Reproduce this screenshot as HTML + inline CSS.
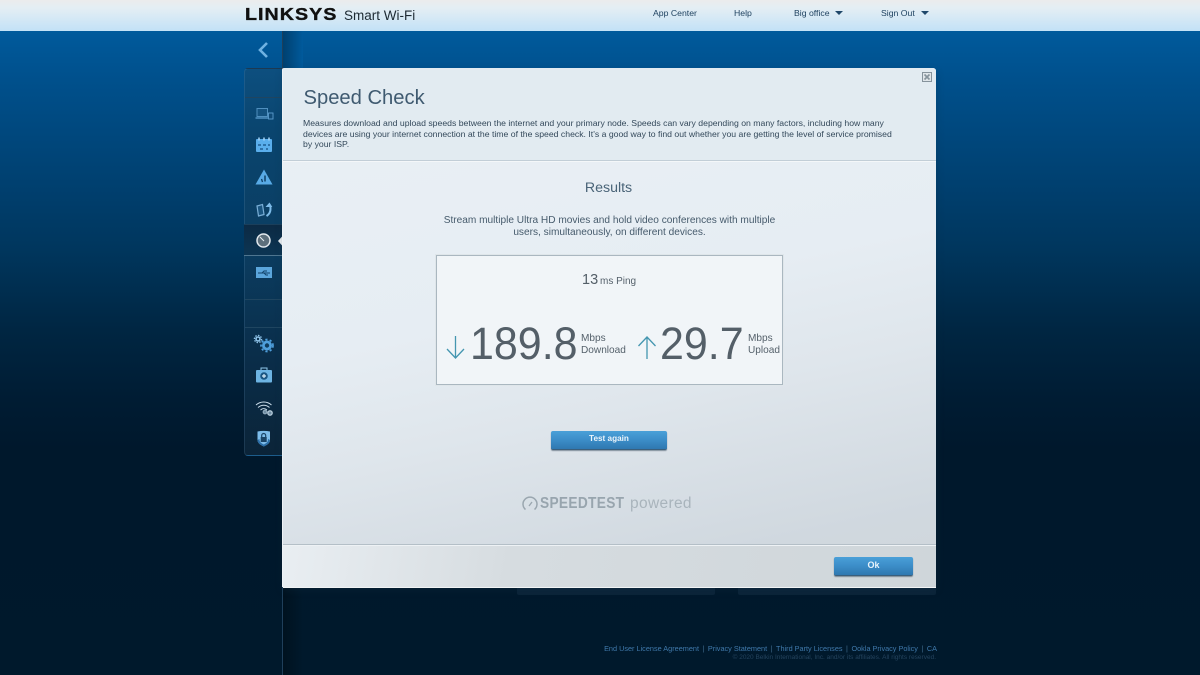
<!DOCTYPE html>
<html><head><meta charset="utf-8"><title>Speed Check</title>
<style>
html,body{margin:0;padding:0}
body{width:1200px;height:675px;overflow:hidden;position:relative;font-family:"Liberation Sans",sans-serif;background:linear-gradient(180deg,#005a9c 31px,#00508c 80px,#003f6e 190px,#00365d 250px,#002642 330px,#001c33 400px,#00182c 450px,#00192c 675px)}
.a{position:absolute}
#top{left:0;top:0;width:1200px;height:31px;background:linear-gradient(180deg,#ececec 0,#e4eef4 8px,#c4e2f6 30px)}
.nav{position:absolute;top:7px;font-size:8.7px;line-height:12px;color:#1f4260;white-space:nowrap}
.car{position:absolute;top:11px;width:0;height:0;border-left:4.5px solid transparent;border-right:4.5px solid transparent;border-top:4.5px solid #20486a}
#modal{left:283px;top:68px;width:653px;height:519px;background:linear-gradient(168deg,#eaf0f5 0,#e6edf3 45%,#dfe6ec 62%,#d0d8df 88%,#cfd6da 100%);border-radius:2px 3px 0 0;box-shadow:-1px 0 0 #eef2f5,0 1px 0 #f2f4f5,0 3px 8px rgba(20,50,70,.3);overflow:hidden}
#modal .a{white-space:nowrap}
.big{font-size:45px;line-height:50px;color:#545f68;transform:scaleX(.955);transform-origin:left top}
.sm{font-size:10.1px;line-height:12px;color:#55616b}
.btn{background:linear-gradient(180deg,#4aa0d8 0,#3d8fca 45%,#2f78b0 100%);border-radius:2px;border-bottom:1px solid #3a5f7c;box-shadow:0 1px 1px rgba(40,60,80,.5);color:#eaf4fb;font-weight:bold;text-align:center}
.sep{left:245px;width:38px;height:1px;background:#1f4560}
.pipe{color:#3f6a8c;margin:0 3.5px}
</style></head><body>
<div class="a" style="left:282px;top:31px;width:1px;height:644px;background:#1f3f5a"></div>
<div class="a" style="left:283px;top:31px;width:20px;height:37px;background:linear-gradient(90deg,#00406f,#005a9c)"></div>
<div class="a" style="left:283px;top:588px;width:20px;height:87px;background:linear-gradient(90deg,#00121f,#00192c)"></div>

<div class="a" id="top"></div>
<div class="a" style="left:244.500px;top:3px;font-size:17.500px;line-height:22px;font-weight:bold;color:#111;letter-spacing:.9px;-webkit-text-stroke:.35px #111;transform:scaleX(1.125);transform-origin:left top;white-space:nowrap">LINKSYS</div>
<div class="a" style="left:344px;top:7px;font-size:13.500px;line-height:17px;color:#1d2a33;white-space:nowrap">Smart Wi-Fi</div>
<div class="nav" style="left:653px">App Center</div>
<div class="nav" style="left:734px">Help</div>
<div class="nav" style="left:794px">Big office</div><div class="car" style="left:835px"></div>
<div class="nav" style="left:881px">Sign Out</div><div class="car" style="left:921px"></div>

<svg class="a" style="left:257px;top:41px" width="12" height="18" viewBox="0 0 12 18"><path d="M10 2 3 9l7 7" fill="none" stroke="#6fb2e2" stroke-width="2.6"/></svg>

<!-- sidebar -->
<div class="a" style="left:244px;top:68px;width:39px;height:388px;border-radius:4px 0 0 4px;background:linear-gradient(180deg,#0d4f7f 0,#0a456f 60px,#0b3d61 180px,#0a2d49 290px,#0b2438 388px);box-sizing:border-box;border:1px solid rgba(120,170,210,.16);border-right:0"></div>
<div class="a sep" style="top:97px"></div>
<div class="a" style="left:244px;top:224px;width:39px;height:32px;background:linear-gradient(180deg,#0c2a44,#0c3553);border-top:1px solid #1b3f5b;border-bottom:1px solid #4f7690;box-sizing:border-box"></div>
<div class="a sep" style="top:299px"></div>
<div class="a sep" style="top:327px"></div>
<svg class="a" style="left:244px;top:100px" width="46" height="350" viewBox="244 100 46 350">
 <!-- devices -->
 <rect x="257" y="108.500" width="10.500" height="8" fill="#14527f" stroke="#4f8fbe" stroke-width="1"/><path d="M255.500 118h15" stroke="#5b9ccd" stroke-width="1.300"/><rect x="268.500" y="113" width="4.500" height="6" fill="#0f4a76" stroke="#5b9ccd" stroke-width=".9"/>
 <!-- calendar -->
 <rect x="256" y="139" width="16" height="13" rx="1" fill="#5aaeec"/><path d="M259 137.500v3M264 137.500v3M269 137.500v3" stroke="#a4d4f6" stroke-width="1.500"/><path d="M258 145h3M263 145h3M268 145h2M260 149h3M266 149h2" stroke="#1f5f93" stroke-width="1.500"/>
 <!-- warning -->
 <path d="M264 169.500l8.500 15h-17z" fill="#58aae6"/><path d="M265 175.500v6" stroke="#0e3f66" stroke-width="1.500"/><path d="M261.500 179l1 3" stroke="#0e3f66" stroke-width="1.300"/>
 <!-- update -->
 <path d="M257 206l5.500-1.500 1.500 10-5.500 1.500z" fill="#1a5580" stroke="#79aed6" stroke-width="1.200"/><path d="M266.500 216c4-2.500 4.500-7 3.500-11" fill="none" stroke="#7dbbe8" stroke-width="2"/><path d="M265.500 207l4-4.500 2.800 4.500z" fill="#7dbbe8"/>
 <!-- gauge -->
 <circle cx="263.500" cy="240.500" r="6.500" fill="#5d6f7c" stroke="#e3e9ee" stroke-width="1.500"/><path d="M260 237l4 4" stroke="#e8eef3" stroke-width="1"/>
 <path d="M283 235.500v11l-5-5.500z" fill="#f0f4f7"/>
 <!-- usb -->
 <rect x="256" y="267" width="16" height="11" fill="#5ba6dc"/><path d="M258 273h12M262 273l2-2h3M264 273l2 2h2" fill="none" stroke="#11436a" stroke-width=".9"/>
 <!-- gears -->
 <circle cx="258" cy="339" r="2" fill="none" stroke="#8cc0e6" stroke-width="1.600"/><circle cx="258" cy="339" r="3.600" fill="none" stroke="#8cc0e6" stroke-width="1.300" stroke-dasharray="1.500 1.300"/>
 <circle cx="267" cy="345.500" r="3.600" fill="#0f3c5d" stroke="#4f9fdc" stroke-width="2.800"/><circle cx="267" cy="345.500" r="6" fill="none" stroke="#4f9fdc" stroke-width="1.700" stroke-dasharray="2.200 2.200"/>
 <!-- medkit -->
 <rect x="256" y="370" width="16" height="12.500" rx="1" fill="#6db4e3"/><path d="M261 370v-2h6v2" fill="none" stroke="#8fc6ea"/><circle cx="264" cy="376" r="3.800" fill="#1b5682"/><path d="M262 376h4M264 374v4" stroke="#d5ebf8" stroke-width="1.200"/>
 <!-- wifi -->
 <g fill="none" stroke="#c9dbe8" stroke-width="1"><path d="M256 405c4.500-4 11-4 15.500 0"/><path d="M258 407.500c3.500-3 8-3 11.500 0"/><path d="M260.500 410c2-1.800 4.500-1.800 6.500 0"/></g>
 <circle cx="265" cy="412" r="1.800" fill="#6f8da3" stroke="#8fa9bc" stroke-width="1.200"/><circle cx="270" cy="413" r="2.200" fill="#6f8da3" stroke="#b5cbda" stroke-width="1.300"/>
 <!-- shield -->
 <path d="M257.500 431.500c4-.8 8.500-.8 12.500 0v8.500c0 3-3 5-6.250 6.500-3.250-1.500-6.250-3.500-6.250-6.500z" fill="#7dbce9"/><path d="M263.750 446.500c-3.250-1.500-6.250-3.500-6.250-6.500l2-1v1c0 2 2 3.500 4.250 4.500 2.250-1 4.250-2.500 4.250-4.500v-1l2 1c0 3-3 5-6.250 6.500z" fill="#2c6fa8"/><rect x="260.700" y="437" width="6" height="5" fill="#1a4466"/><path d="M261.700 437v-1.500a2 2 0 0 1 4 0v1.500" fill="none" stroke="#1a4466" stroke-width="1.200"/>
</svg>

<!-- cards peeking under the modal -->
<div class="a" style="left:517px;top:588px;width:198px;height:7px;background:#0b2439;border-radius:0 0 2px 2px"></div>
<div class="a" style="left:738px;top:588px;width:198px;height:7px;background:#0b2439;border-radius:0 0 2px 2px"></div>

<div class="a" id="modal">
 <div class="a" style="left:0;top:0;width:653px;height:92px;background:#e2ebf1;border-bottom:1px solid #c2ced7;box-shadow:0 1px 0 #f4f7f9"></div>
 <svg class="a" style="left:639px;top:4px" width="10" height="10" viewBox="0 0 10 10"><rect x=".5" y=".5" width="9" height="9" fill="#dfe5e9" stroke="#86939c"/><path d="M2.500 2.500l5 5M7.500 2.500l-5 5" stroke="#86939c" stroke-width="1.600"/></svg>
 <div class="a" style="left:20.500px;top:18px;font-size:20.200px;line-height:25px;color:#3f5a70">Speed Check</div>
 <div class="a" style="left:20px;top:50px;font-size:8.680px;line-height:10.500px;color:#33485a">Measures download and upload speeds between the internet and your primary node. Speeds can vary depending on many factors, including how many<br>devices are using your internet connection at the time of the speed check. It's a good way to find out whether you are getting the level of service promised<br>by your ISP.</div>
 <div class="a" style="left:0;top:111px;width:653px;text-align:center;font-size:14.200px;line-height:18px;color:#4a6478;transform:translateX(-1px)">Results</div>
 <div class="a" style="left:0;top:147px;width:653px;text-align:center;font-size:10.120px;line-height:12px;color:#465b6c">Stream multiple Ultra HD movies and hold video conferences with multiple<br>users, simultaneously, on different devices.</div>

 <div class="a" style="left:153px;top:187px;width:345px;height:128px;border:1px solid #aab7c0;background:#f1f5f8;box-shadow:0 0 0 1px #dfe6ea"></div>
 <div class="a" style="left:299px;top:203px;font-size:14.500px;line-height:18px;color:#545f68">13</div>
 <div class="a" style="left:317px;top:207px;font-size:10px;line-height:13px;color:#55616b">ms Ping</div>
 <svg class="a" style="left:162px;top:266px" width="22" height="26" viewBox="0 0 22 26"><path d="M10.500 2v22M2 15l8.500 9 8.500-9" fill="none" stroke="#4496b0" stroke-width="1.300"/></svg>
 <div class="a big" style="left:186.500px;top:251px">189.8</div>
 <div class="a sm" style="left:298px;top:265px">Mbps<br>Download</div>
 <svg class="a" style="left:353px;top:266px" width="22" height="26" viewBox="0 0 22 26"><path d="M11 25V3M2.500 12L11 3l8.500 9" fill="none" stroke="#4496b0" stroke-width="1.300"/></svg>
 <div class="a big" style="left:376.500px;top:251px">29.7</div>
 <div class="a sm" style="left:465px;top:265px">Mbps<br>Upload</div>

 <div class="a btn" style="left:268px;top:363px;width:116px;height:18px;line-height:15px;font-size:8.200px">Test again</div>

 <svg class="a" style="left:239px;top:428px" width="16" height="16" viewBox="0 0 16 16"><path d="M3.500 13.500a7 7 0 1 1 9 0" fill="none" stroke="#9aa6af" stroke-width="1.500"/><path d="M7 10l3-4" stroke="#9aa6af" stroke-width="1.300"/></svg>
 <div class="a" style="left:257px;top:427px;font-size:15.500px;line-height:18px;font-weight:bold;color:#98a5ae;letter-spacing:.35px;transform:scaleX(.885);transform-origin:left top">SPEEDTEST</div>
 <div class="a" style="left:347px;top:427px;font-size:15.500px;line-height:18px;color:#a9b4bc;letter-spacing:.35px">powered</div>

 <div class="a" style="left:0;top:476px;width:653px;height:43px;background:linear-gradient(100deg,#e9eef2 0,#d6dce0 35%,#cfd6da 100%);border-top:1px solid #b4bfc7;box-shadow:inset 0 1px 0 #eef2f5;box-sizing:border-box"></div>
 <div class="a btn" style="left:551px;top:489px;width:79px;height:18px;line-height:16px;font-size:9px">Ok</div>
</div>

<div class="a" style="right:263px;top:644px;font-size:7.300px;line-height:9px;color:#3f79ab;white-space:nowrap">End User License Agreement<span class="pipe">|</span>Privacy Statement<span class="pipe">|</span>Third Party Licenses<span class="pipe">|</span>Ookla Privacy Policy<span class="pipe">|</span>CA</div>
<div class="a" style="right:264px;top:653px;font-size:6.500px;line-height:9px;color:#24445e;white-space:nowrap">© 2020 Belkin International, Inc. and/or its affiliates. All rights reserved.</div>
</body></html>
